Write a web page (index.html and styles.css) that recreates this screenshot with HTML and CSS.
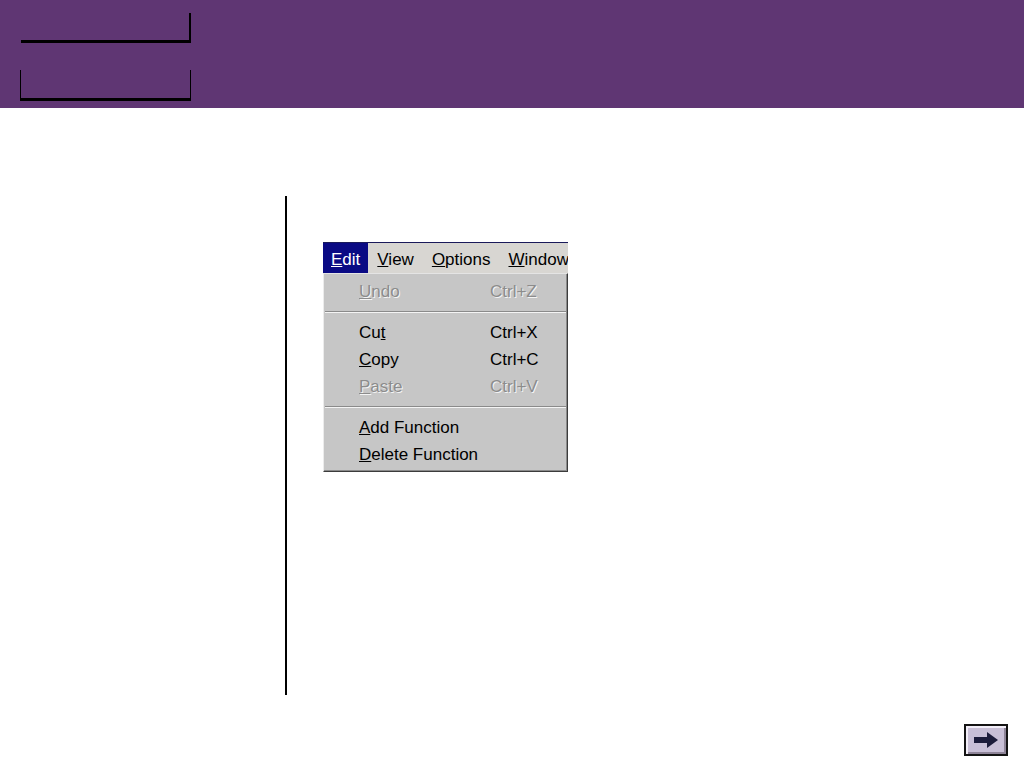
FILE: index.html
```html
<!DOCTYPE html>
<html lang="en">
  <head>
    <meta charset="UTF-8" />
    <meta name="viewport" content="width=device-width, initial-scale=1.0" />
    <title>Edit Menu</title>
    <link rel="stylesheet" href="styles.css">
  </head>
  <body>
    <header class="banner">
      <div class="tab tab-top"></div>
      <div class="tab tab-bottom"></div>
    </header>

    <main class="page">
      <div class="content">
        <div class="menu-shot">
          <div class="menubar">
            <span class="menubar-item active"><u>E</u>dit</span>
            <span class="menubar-item"><u>V</u>iew</span>
            <span class="menubar-item"><u>O</u>ptions</span>
            <span class="menubar-item"><u>W</u>indow</span>
          </div>
          <div class="dropdown">
            <div class="menu-row disabled"><span><u>U</u>ndo</span><span>Ctrl+Z</span></div>
            <div class="separator"></div>
            <div class="menu-row"><span>Cu<u>t</u></span><span>Ctrl+X</span></div>
            <div class="menu-row"><span><u>C</u>opy</span><span>Ctrl+C</span></div>
            <div class="menu-row disabled"><span><u>P</u>aste</span><span>Ctrl+V</span></div>
            <div class="separator"></div>
            <div class="menu-row"><span><u>A</u>dd Function</span><span></span></div>
            <div class="menu-row"><span><u>D</u>elete Function</span><span></span></div>
          </div>
        </div>
      </div>
    </main>

    <footer class="footer">
      <button class="next-btn" aria-label="Next">
        <svg width="24" height="16" viewBox="0 0 24 16">
          <path d="M0 5 H13 V0 L24 8 L13 16 V11 H0 Z" fill="#1c1c3a" />
        </svg>
      </button>
    </footer>
  </body>
</html>
```

FILE: styles.css
```css
/* styles.css */
body {
  margin: 0;
  width: 1024px;
  height: 768px;
  background: white;
  font-family: "Liberation Sans", Arial, sans-serif;
  display: flex;
  flex-direction: column;
  overflow: hidden;
}

.banner {
  height: 108px;
  background-color: #5f3673;
  padding: 13px 0 0 20px;
  box-sizing: border-box;
  display: flex;
  flex-direction: column;
}

.tab {
  width: 171px;
  box-sizing: border-box;
}

.tab-top {
  height: 30px;
  margin-left: 1px;
  width: 170px;
  border-right: 2px solid #000;
  border-bottom: 3px solid #000;
}

.tab-bottom {
  height: 31px;
  margin-top: 27px;
  border-left: 1px solid #000;
  border-right: 1px solid #000;
  border-bottom: 3px solid #000;
}

.page {
  padding: 88px 0 0 285px;
}

.content {
  height: 499px;
  border-left: 2px solid #000;
  padding: 46px 0 0 36px;
  box-sizing: border-box;
}

.menu-shot {
  width: 245px;
  font-size: 17px;
  color: #000;
}

.menubar {
  height: 30px;
  border-top: 1px solid #1a1a5a;
  background-color: #d8d6d2;
  display: flex;
  white-space: nowrap;
  overflow: hidden;
}

.menubar-item {
  padding: 0 9px;
  line-height: 33px;
}

.menubar-item.active {
  background-color: #0a0a84;
  color: white;
  padding: 0 8px;
}

.dropdown {
  background-color: #c6c6c6;
  border: 1px solid;
  border-color: #e4e4e4 #3c3c3c #3c3c3c #ececec;
  box-shadow: inset -1px -1px 0 #8a8a8a;
  padding: 4px 0 3px 0;
}

.menu-row {
  display: grid;
  grid-template-columns: 131px auto;
  height: 27px;
  line-height: 27px;
  padding-left: 35px;
}

.menu-row.disabled {
  color: #8c8c8c;
  text-shadow: 1px 1px 0 #f4f4f4;
}

.separator {
  margin: 6px 1px 6px 1px;
  border-top: 1px solid #8a8a8a;
  border-bottom: 1px solid #f4f4f4;
}

.footer {
  display: flex;
  justify-content: flex-end;
  padding: 29px 16px 0 0;
}

.next-btn {
  width: 44px;
  height: 32px;
  padding: 0;
  border: 2px solid #141414;
  background-color: #c8bfd6;
  box-shadow: inset 2px 2px 0 #f2eef8, inset -2px -2px 0 #8e8498;
  display: flex;
  align-items: center;
  justify-content: center;
  cursor: pointer;
}
```
